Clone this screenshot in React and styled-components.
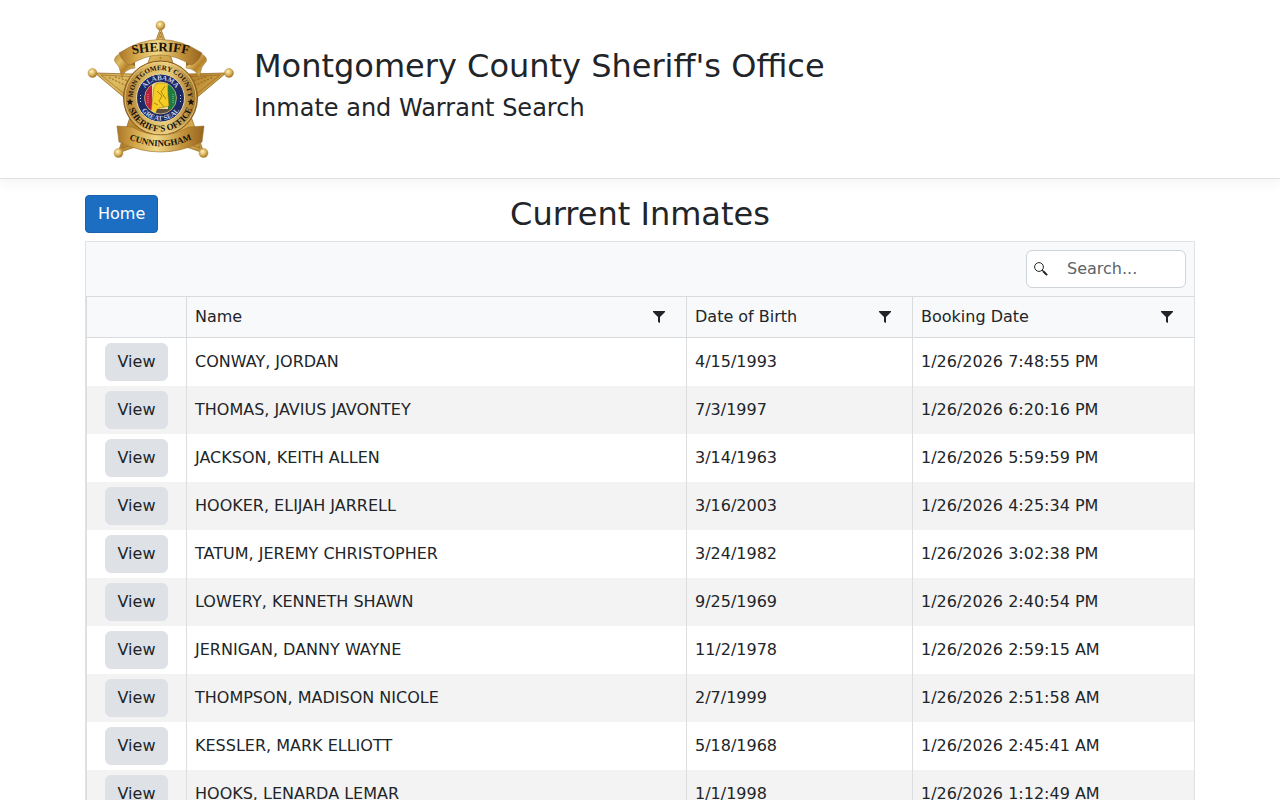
import React, { useState } from 'react';
import styled, { createGlobalStyle } from 'styled-components';

const GlobalStyle = createGlobalStyle`
  *,
  *::before,
  *::after {
    box-sizing: border-box;
  }
  body {
    margin: 0;
    background: #fff;
    color: #212529;
    font-family: 'DejaVu Sans', sans-serif;
    font-size: 16px;
    line-height: 24px;
  }
`;

const Header = styled.header`
  border-bottom: 1px solid #dee2e6;
  box-shadow: 0 4px 12px rgba(0, 0, 0, 0.05);
  padding: 16px 0;
`;

const Container = styled.div`
  width: 100%;
  max-width: 1140px;
  margin: 0 auto;
  padding: 0 15px;
`;

const Brand = styled(Container)`
  display: flex;
  align-items: center;
  gap: 19px;
  svg {
    flex: none;
  }
`;

const Title = styled.h1`
  margin: 0 0 9px;
  font-size: 32px;
  line-height: 38px;
  font-weight: 400;
`;

const Subtitle = styled.h2`
  margin: 0 0 8px;
  font-size: 24px;
  line-height: 29px;
  font-weight: 400;
`;

const PageHead = styled.div`
  display: grid;
  grid-template-columns: 1fr auto 1fr;
  align-items: center;
  padding: 16px 0 8px;
`;

const PageTitle = styled.h2`
  margin: 0;
  font-size: 32px;
  line-height: 38px;
  font-weight: 400;
`;

const HomeLink = styled.a`
  justify-self: start;
  padding: 6px 12px;
  border: 1px solid #1861ac;
  border-radius: 4px;
  background: #1b6ec2;
  color: #fff;
  text-decoration: none;
`;

const Grid = styled.div`
  border: 1px solid #dee2e6;
`;

const Toolbar = styled.div`
  display: flex;
  justify-content: flex-end;
  padding: 8px;
  background: #f8f9fb;
`;

const SearchBox = styled.label`
  display: flex;
  align-items: center;
  width: 160px;
  height: 38px;
  padding-left: 7px;
  border: 1px solid #ced4da;
  border-radius: 6px;
  background: #fff;
  svg {
    flex: none;
  }
  input {
    flex: 1;
    min-width: 0;
    padding: 0 12px 0 19px;
    border: 0;
    outline: 0;
    background: none;
    color: inherit;
    font: inherit;
  }
  input::placeholder {
    color: #5c636a;
    opacity: 1;
  }
`;

const Table = styled.table`
  width: 100%;
  table-layout: fixed;
  border-collapse: separate;
  border-spacing: 0;
`;

const Col = styled.col`
  width: ${({ $width }) => $width || 'auto'};
`;

const Th = styled.th`
  height: 42px;
  padding: 0 8px;
  border: solid #d9dcdf;
  border-width: 1px 1px 1px 0;
  background: #f8f9fb;
  font-weight: 400;
  text-align: left;
  &:first-child {
    border-left-width: 1px;
  }
  &:last-child {
    border-right-width: 0;
  }
`;

const HeadCell = styled.div`
  display: flex;
  align-items: center;
  justify-content: space-between;
`;

const FilterButton = styled.button`
  display: flex;
  padding: 12px 13px;
  border: 0;
  background: none;
  color: inherit;
  cursor: pointer;
`;

const Tr = styled.tr`
  &:nth-child(even) {
    background: #f3f3f3;
  }
`;

const Td = styled.td`
  height: 48px;
  padding: 0 8px;
  border-right: 1px solid #dcdee0;
  &:first-child {
    border-left: 1px solid #dcdee0;
    text-align: center;
  }
  &:last-child {
    border-right: 0;
  }
`;

const ViewButton = styled.button`
  height: 38px;
  padding: 0 12px;
  border: 1px solid #dee2e6;
  border-radius: 6px;
  background: #dee2e6;
  color: inherit;
  font: inherit;
  vertical-align: middle;
  cursor: pointer;
`;

const columns = [
  { title: 'Name', width: '' },
  { title: 'Date of Birth', width: '226px' },
  { title: 'Booking Date', width: '281px' },
];

const inmates = [
  { name: 'CONWAY, JORDAN', dob: '4/15/1993', booked: '1/26/2026 7:48:55 PM' },
  { name: 'THOMAS, JAVIUS JAVONTEY', dob: '7/3/1997', booked: '1/26/2026 6:20:16 PM' },
  { name: 'JACKSON, KEITH ALLEN', dob: '3/14/1963', booked: '1/26/2026 5:59:59 PM' },
  { name: 'HOOKER, ELIJAH JARRELL', dob: '3/16/2003', booked: '1/26/2026 4:25:34 PM' },
  { name: 'TATUM, JEREMY CHRISTOPHER', dob: '3/24/1982', booked: '1/26/2026 3:02:38 PM' },
  { name: 'LOWERY, KENNETH SHAWN', dob: '9/25/1969', booked: '1/26/2026 2:40:54 PM' },
  { name: 'JERNIGAN, DANNY WAYNE', dob: '11/2/1978', booked: '1/26/2026 2:59:15 AM' },
  { name: 'THOMPSON, MADISON NICOLE', dob: '2/7/1999', booked: '1/26/2026 2:51:58 AM' },
  { name: 'KESSLER, MARK ELLIOTT', dob: '5/18/1968', booked: '1/26/2026 2:45:41 AM' },
  { name: 'HOOKS, LENARDA LEMAR', dob: '1/1/1998', booked: '1/26/2026 1:12:49 AM' },
];

const tips = [
  [75.5, 9.5],
  [7.5, 57],
  [144, 57],
  [33.5, 137],
  [118.5, 137],
];

const Badge = () => (
  <svg width="150" height="146" viewBox="0 0 150 146" role="img" aria-label="Sheriff badge">
    <defs>
      <linearGradient id="gold" x1="0" y1="0" x2="1" y2="1">
        <stop offset="0" stopColor="#b98a35" />
        <stop offset="0.3" stopColor="#e0bd62" />
        <stop offset="0.55" stopColor="#b5812b" />
        <stop offset="0.8" stopColor="#dcb555" />
        <stop offset="1" stopColor="#97661b" />
      </linearGradient>
      <linearGradient id="band" x1="0" y1="0" x2="1" y2="0">
        <stop offset="0" stopColor="#a9752a" />
        <stop offset="0.2" stopColor="#d3a548" />
        <stop offset="0.45" stopColor="#efd786" />
        <stop offset="0.75" stopColor="#c2923a" />
        <stop offset="1" stopColor="#96631f" />
      </linearGradient>
      <linearGradient id="plate" x1="0" y1="0" x2="1" y2="0">
        <stop offset="0" stopColor="#a8762c" />
        <stop offset="0.3" stopColor="#dcb761" />
        <stop offset="0.6" stopColor="#e9cd7c" />
        <stop offset="1" stopColor="#a06e24" />
      </linearGradient>
      <radialGradient id="ball" cx="0.4" cy="0.35" r="0.7">
        <stop offset="0" stopColor="#fff3bd" />
        <stop offset="0.6" stopColor="#d4ab50" />
        <stop offset="1" stopColor="#8f6420" />
      </radialGradient>
      <path id="arcSheriff" d="M43 39.5 Q75.5 31 108 39.5" />
      <path id="arcCounty" d="M49 89 A27.5 27.5 0 1 1 102 89" />
      <path id="arcOffice" d="M42 82 A33.5 33.5 0 0 0 109 82" />
      <path id="arcAlabama" d="M57.5 82 A18 18 0 0 1 93.5 82" />
      <path id="arcSeal" d="M53 82 A22.5 22.5 0 0 0 98 82" />
      <path id="arcName" d="M40 121.5 Q75.5 139 111 121.5" />
    </defs>
    <path
      d="M75.5 12 L92 58.3 L141 57 L102.1 89.7 L119 137 L75.5 122 L33 137 L48.9 89.7 L10 57 L59 58.3 Z"
      fill="url(#gold)"
      stroke="#94692a"
      strokeWidth="0.8"
    />
    <path
      d="M75.5 16 L81 34 M75.5 16 L70 34 M16 59 L45 60.5 M16 59 L42 80 M135 59 L106 60.5 M135 59 L109 80 M37 132 L43 114 M37 132 L54 126 M115 132 L108 114 M115 132 L97 126"
      stroke="#8d6022"
      strokeWidth="0.7"
      opacity="0.8"
    />
    <path
      d="M24 61.5 L44 71 M30 61 L44 65 M127 61.5 L107 71 M121 61 L107 65 M75.5 20 V60 M66 46 L60 58 M85 46 L91 58"
      stroke="#8d6022"
      strokeWidth="1.6"
      strokeDasharray="2 1.5"
      opacity="0.6"
    />
    {tips.map(([x, y]) => (
      <circle key={x} cx={x} cy={y} r="4.5" fill="url(#ball)" stroke="#b58c3e" strokeWidth="0.5" />
    ))}
    <path
      d="M35 38 Q29 40 29.5 45 L34 51 L37 62 Q39 53 50 52 L49 46 Z"
      fill="url(#gold)"
      stroke="#98702f"
      strokeWidth="0.5"
    />
    <path
      d="M116 38 Q122 40 121.5 45 L117 51 L114 62 Q112 53 101 52 L102 46 Z"
      fill="url(#gold)"
      stroke="#98702f"
      strokeWidth="0.5"
    />
    <path d="M45 48 L50 46 L50 50 Z M106 48 L101 46 L101 50 Z" fill="#9a6d28" />
    <path
      d="M34 37 Q75.5 10 117 37 Q113 47 106 49 Q75.5 29 45 49 Q38 47 34 37 Z"
      fill="url(#band)"
      stroke="#98702f"
      strokeWidth="0.6"
    />
    <circle cx="75.5" cy="82" r="37" fill="url(#plate)" stroke="#86591c" strokeWidth="1" />
    <circle cx="75.5" cy="82" r="35.5" fill="none" stroke="#ecd488" strokeWidth="0.7" />
    <circle cx="75.5" cy="82" r="24" fill="#1d2a66" stroke="#e8d9a0" strokeWidth="1" />
    <clipPath id="disc">
      <circle cx="75.5" cy="82" r="16" />
    </clipPath>
    <g clipPath="url(#disc)">
      <rect x="58" y="65" width="10" height="34" fill="#b9203f" />
      <rect x="67" y="65" width="17" height="34" fill="#efd890" />
      <rect x="83" y="65" width="10" height="34" fill="#1f7a42" />
      <path d="M69 71 L72 67 H82 L84 90 L74 92 L71 98 L66 96 Z" fill="#f6cd25" stroke="#8a6a12" strokeWidth="0.5" />
      <path
        d="M72 75 L77 80 L74 85 L79 91 M80 70 L76 76 L81 83 M69 87 L73 89"
        fill="none"
        stroke="#96710f"
        strokeWidth="0.8"
      />
      <path d="M72 93 H90 V99 H70 Z" fill="#5b4c3e" />
      <path d="M63 78 V88" stroke="#e58a96" strokeWidth="1" strokeDasharray="1 1" />
      <path d="M88 78 V88" stroke="#8fd09b" strokeWidth="1" strokeDasharray="1 1" />
    </g>
    <circle cx="75.5" cy="82" r="16" fill="none" stroke="#d8c98f" strokeWidth="0.7" />
    <path d="M55.5 79 V86 M95.5 79 V86" stroke="#c8d3ea" strokeWidth="1" strokeDasharray="1 2" />
    <path
      d="M32 110 L47 111 Q75.5 127 104 111 L119 110 L117 126 Q75.5 146 34 126 Z"
      fill="url(#band)"
      stroke="#98702f"
      strokeWidth="0.6"
    />
    <g fontFamily="'Liberation Serif', serif" fontWeight="700" fill="#17120a" textAnchor="middle">
      <text fontSize="13">
        <textPath href="#arcSheriff" startOffset="50%">
          SHERIFF
        </textPath>
      </text>
      <text fontSize="7">
        <textPath href="#arcCounty" startOffset="50%">
          MONTGOMERY COUNTY
        </textPath>
      </text>
      <text fontSize="9">
        <textPath href="#arcOffice" startOffset="50%">
          SHERIFF&apos;S OFFICE
        </textPath>
      </text>
      <text fontSize="9">
        <textPath href="#arcName" startOffset="50%">
          CUNNINGHAM
        </textPath>
      </text>
      <g fill="#c8d3ea" fontSize="7">
        <text>
          <textPath href="#arcAlabama" startOffset="50%">
            ALABAMA
          </textPath>
        </text>
        <text>
          <textPath href="#arcSeal" startOffset="50%">
            GREAT SEAL
          </textPath>
        </text>
      </g>
    </g>
    <path
      id="star"
      d="M45 82.5 L46 84.8 L48.4 85 L46.6 86.6 L47.2 89 L45 87.7 L42.8 89 L43.4 86.6 L41.6 85 L44 84.8 Z"
      fill="#17120a"
    />
    <use href="#star" x="61" />
  </svg>
);

const SearchIcon = () => (
  <svg width="14" height="14" viewBox="0 0 14 14" fill="none" stroke="#212529" aria-hidden="true">
    <circle cx="5" cy="5" r="4.4" strokeWidth="1" />
    <path d="M8.2 8.2 L9.6 9.6" strokeWidth="1.2" />
    <path d="M9.2 9.2 L13.1 13.1" strokeWidth="2" />
  </svg>
);

const FilterIcon = () => (
  <svg width="12" height="12" viewBox="0 0 12 12" aria-hidden="true">
    <path d="M0 0 H12 V1 L7 6 V12 L5 11 V6 L0 1 Z" fill="currentColor" />
  </svg>
);

const App = () => {
  const [search, setSearch] = useState('');
  const rows = inmates.filter((item) => item.name.includes(search.toUpperCase()));

  return (
    <>
      <GlobalStyle />
      <Header>
        <Brand>
          <Badge />
          <div>
            <Title>Montgomery County Sheriff&apos;s Office</Title>
            <Subtitle>Inmate and Warrant Search</Subtitle>
          </div>
        </Brand>
      </Header>
      <Container as="main">
        <PageHead>
          <HomeLink href="#home">Home</HomeLink>
          <PageTitle>Current Inmates</PageTitle>
        </PageHead>
        <Grid>
          <Toolbar>
            <SearchBox>
              <SearchIcon />
              <input
                type="text"
                aria-label="Search"
                placeholder="Search..."
                value={search}
                onChange={(e) => setSearch(e.target.value)}
              />
            </SearchBox>
          </Toolbar>
          <Table>
            <colgroup>
              <Col $width="101px" />
              {columns.map((item) => (
                <Col key={item.title} $width={item.width} />
              ))}
            </colgroup>
            <thead>
              <tr>
                <Th aria-label="Actions" />
                {columns.map((item) => (
                  <Th key={item.title} scope="col">
                    <HeadCell>
                      {item.title}
                      <FilterButton type="button" aria-label={`Filter ${item.title}`}>
                        <FilterIcon />
                      </FilterButton>
                    </HeadCell>
                  </Th>
                ))}
              </tr>
            </thead>
            <tbody>
              {rows.map((item) => (
                <Tr key={item.name}>
                  <Td>
                    <ViewButton type="button">View</ViewButton>
                  </Td>
                  <Td>{item.name}</Td>
                  <Td>{item.dob}</Td>
                  <Td>{item.booked}</Td>
                </Tr>
              ))}
            </tbody>
          </Table>
        </Grid>
      </Container>
    </>
  );
};

export default App;
